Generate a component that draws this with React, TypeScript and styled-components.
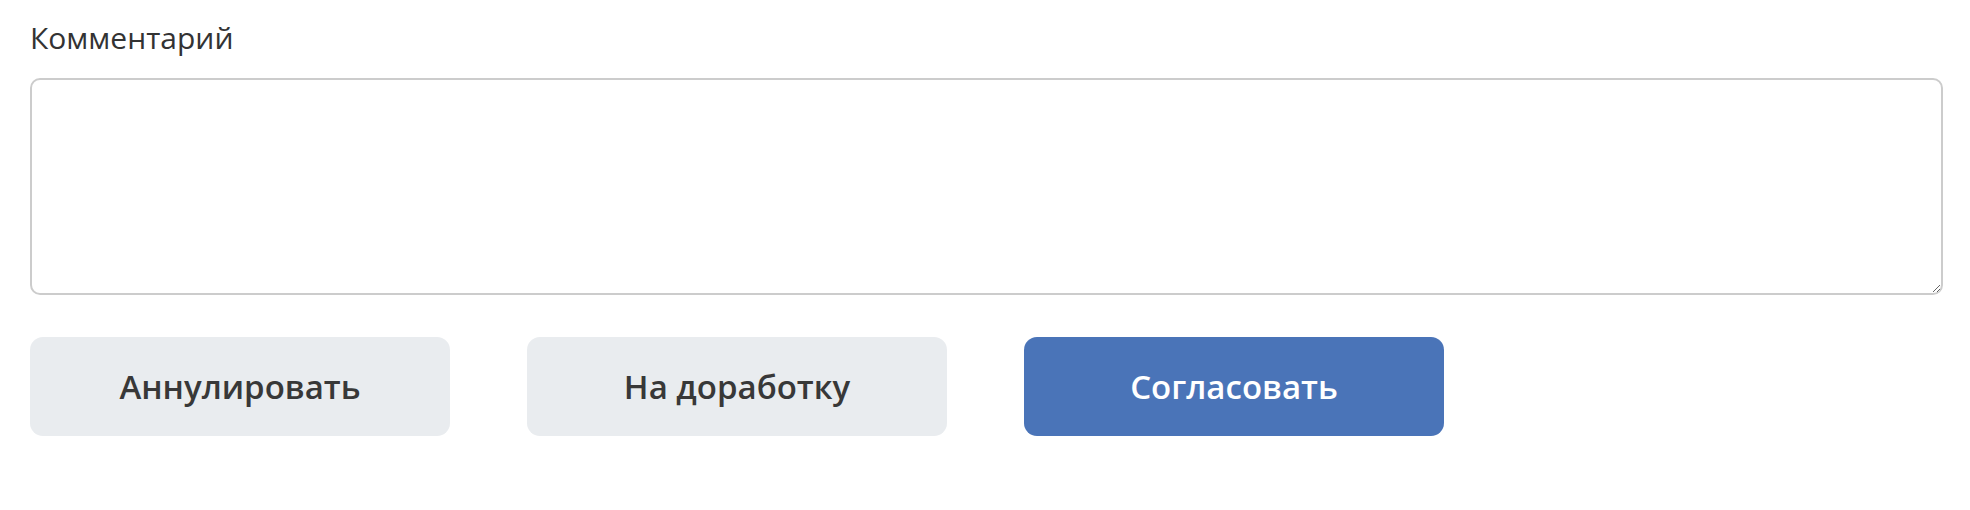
import React from "react";
import styled, { createGlobalStyle } from "styled-components";

const Global = createGlobalStyle`
  html, body { margin: 0; padding: 0; background: #ffffff; }
  body { font-family: "Open Sans", "Noto Sans", sans-serif; color: #333333; }
`;

const Page = styled.div`
  padding: 23px 27px 0 30px;
  display: flex;
  flex-direction: column;
`;

const Label = styled.label`
  font-size: 30px;
  line-height: 30px;
  font-weight: 400;
  color: #333333;
  margin-bottom: 25px;
`;

const Comment = styled.textarea`
  box-sizing: border-box;
  width: 1913px;
  height: 217px;
  border: 2px solid #cccccc;
  border-radius: 10px;
  background: #ffffff;
  resize: vertical;
  font-family: inherit;
  font-size: 20px;
  padding: 10px 14px;
  outline: none;
`;

const Actions = styled.div`
  display: flex;
  gap: 77px;
  margin-top: 42px;
`;

const Button = styled.button<{ $primary?: boolean }>`
  width: 420px;
  height: 99px;
  border: none;
  border-radius: 13px;
  background: ${(p) => (p.$primary ? "#4a74b8" : "#e9ecef")};
  color: ${(p) => (p.$primary ? "#ffffff" : "#383838")};
  font-family: "Open Sans", "Noto Sans", sans-serif;
  font-size: 33px;
  font-weight: 600;
  cursor: pointer;
`;

export default function App() {
  return (
    <>
      <Global />
      <Page>
        <Label>Комментарий</Label>
        <Comment />
        <Actions>
          <Button>Аннулировать</Button>
          <Button>На доработку</Button>
          <Button $primary>Согласовать</Button>
        </Actions>
      </Page>
    </>
  );
}
